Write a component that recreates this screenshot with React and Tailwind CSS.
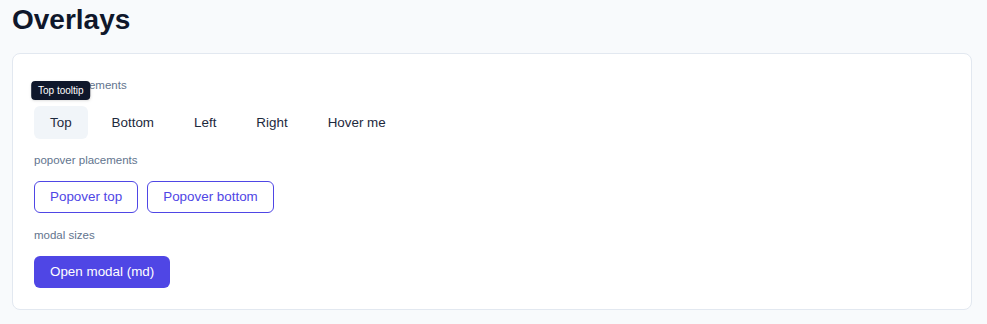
const placements = ["Top", "Bottom", "Left", "Right", "Hover me"];

const SectionLabel = ({ children }) => (
  <p className="text-[11.5px] leading-4 text-slate-500 mb-[13px]">{children}</p>
);

export default function App() {
  return (
    <div
      className="min-h-screen bg-slate-50 px-3 pt-[2px] pb-3"
      style={{ fontFamily: '"Liberation Sans", Arial, sans-serif' }}
    >
      <h1 className="text-[28px] leading-[36px] font-bold text-slate-900">Overlays</h1>
      <div className="mt-[15px] max-w-[960px] rounded-lg border border-slate-200 bg-white px-[21px] pt-[23px] pb-[21px]">
        <section>
          <SectionLabel>tooltip placements</SectionLabel>
          <div className="flex items-center gap-2">
            {placements.map((p, i) => (
              <div key={p} className="relative">
                {i === 0 && (
                  <span className="absolute bottom-full left-1/2 -translate-x-1/2 mb-[6px] whitespace-nowrap rounded bg-slate-900 px-[7px] py-[3px] text-[10px] leading-[13px] text-white shadow">
                    Top tooltip
                  </span>
                )}
                <button
                  type="button"
                  className={`h-[33px] rounded-md px-4 pt-px text-[13.4px] text-slate-800 ${
                    i === 0 ? "bg-slate-100" : "bg-transparent"
                  }`}
                >
                  {p}
                </button>
              </div>
            ))}
          </div>
        </section>

        <section className="mt-[13px]">
          <SectionLabel>popover placements</SectionLabel>
          <div className="flex items-center gap-[9px]">
            <button
              type="button"
              className="h-8 rounded-md border border-[#4f46e5] bg-white px-[15px] text-[13.4px] text-[#4f46e5]"
            >
              Popover top
            </button>
            <button
              type="button"
              className="h-8 rounded-md border border-[#4f46e5] bg-white px-[15px] text-[13.4px] text-[#4f46e5]"
            >
              Popover bottom
            </button>
          </div>
        </section>

        <section className="mt-[14px]">
          <SectionLabel>modal sizes</SectionLabel>
          <button
            type="button"
            className="h-8 rounded-md bg-[#4f46e5] px-4 text-[13.4px] text-white"
          >
            Open modal (md)
          </button>
        </section>
      </div>
    </div>
  );
}
